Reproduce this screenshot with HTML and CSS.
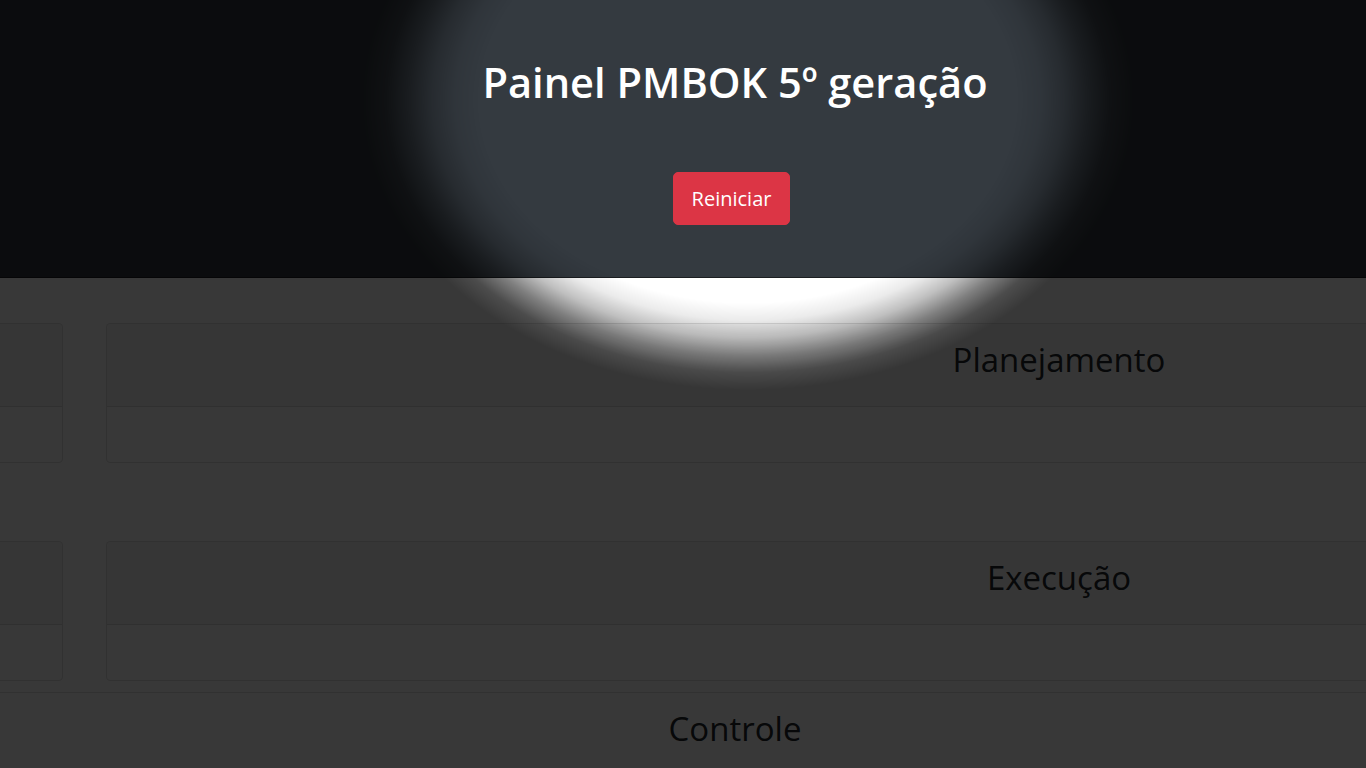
FILE: index.html
```html
<!DOCTYPE html>
<html lang="pt-BR">
<head>
<meta charset="utf-8">
<title>Painel PMBOK 5º geração</title>
<link rel="stylesheet" href="styles.css">
</head>
<body>
<div class="page">
  <header class="topbar">
    <h1 class="title">Painel PMBOK 5º geração</h1>
    <button class="btn-restart" type="button">Reiniciar</button>
  </header>

  <section class="row row-first">
    <div class="card card-side">
      <div class="card-header"><h2 class="card-title">&nbsp;</h2></div>
      <div class="card-body"></div>
    </div>
    <div class="card card-main">
      <div class="card-header"><h2 class="card-title">Planejamento</h2></div>
      <div class="card-body"></div>
    </div>
  </section>

  <section class="row row-second">
    <div class="card card-side">
      <div class="card-header"><h2 class="card-title">&nbsp;</h2></div>
      <div class="card-body"></div>
    </div>
    <div class="card card-main">
      <div class="card-header"><h2 class="card-title">Execução</h2></div>
      <div class="card-body"></div>
    </div>
  </section>

  <section class="panel-control">
    <div class="card-header control-header"><h2 class="card-title">Controle</h2></div>
  </section>
</div>
<div class="spotlight"></div>
</body>
</html>
```
FILE: styles.css
```css
* { box-sizing: border-box; }

html, body {
  margin: 0;
  padding: 0;
  overflow: hidden;
  background: #ffffff;
}

body {
  font-family: "Open Sans", "Noto Sans", "Liberation Sans", sans-serif;
  color: #212529;
  height: 768px;
}

.page {
  width: 1470px;
}

.topbar {
  height: 278px;
  background: #343a40;
  border-bottom: 1px solid #1b1e21;
  display: flex;
  flex-direction: column;
  align-items: center;
  padding-top: 57px;
}

.title {
  margin: 0 0 64px;
  font-size: 41.6px;
  line-height: 51px;
  font-weight: 600;
  color: #ffffff;
}

.btn-restart {
  font-family: inherit;
  font-size: 20px;
  line-height: 33px;
  font-weight: 400;
  color: #ffffff;
  background: #dc3545;
  border: 1px solid #dc3545;
  border-radius: 5px;
  padding: 8.8px 17.6px;
  margin-right: 7px;
  cursor: pointer;
}

.row {
  display: flex;
  gap: 43px;
  margin-left: -200px;
}

.row-first { margin-top: 45px; }
.row-second { margin-top: 78px; }

.card {
  border: 1px solid rgba(0, 0, 0, 0.125);
  border-radius: 4.4px;
  background: #ffffff;
  flex: none;
  overflow: hidden;
}

.card-side { width: 263px; }
.card-main { width: 1906px; }

.card-header {
  background: rgba(0, 0, 0, 0.03);
  border-bottom: 1px solid rgba(0, 0, 0, 0.125);
  padding: 16px 0 26px;
  text-align: center;
}

.card-title {
  margin: 0;
  font-size: 33px;
  line-height: 40px;
  font-weight: 500;
  color: #212529;
}

.card-body {
  height: 55px;
}

.panel-control {
  margin-top: 11px;
  border-top: 1px solid rgba(0, 0, 0, 0.125);
}

.control-header {
  background: transparent;
  border-bottom: none;
}

.spotlight {
  position: fixed;
  inset: 0;
  pointer-events: none;
  background: radial-gradient(ellipse 385px 290px at 748px 100px,
    rgba(0, 0, 0, 0) 0%,
    rgba(0, 0, 0, 0) 70%,
    rgba(0, 0, 0, 0.08) 76%,
    rgba(0, 0, 0, 0.25) 82%,
    rgba(0, 0, 0, 0.5) 88%,
    rgba(0, 0, 0, 0.7) 94%,
    rgba(0, 0, 0, 0.78) 100%);
}
```
